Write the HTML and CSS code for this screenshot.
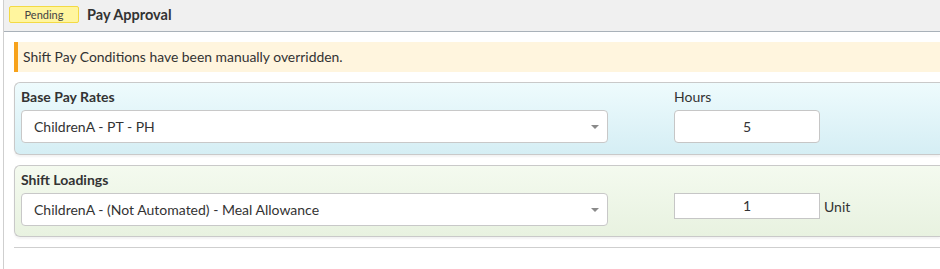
FILE: index.html
```html
<!DOCTYPE html>
<html>
<head>
<meta charset="utf-8">
<link rel="stylesheet" href="styles.css">
</head>
<body>
<div class="page">
  <div class="header">
    <span class="badge">Pending</span>
    <span class="title">Pay Approval</span>
  </div>
  <div class="content">
    <div class="alert">Shift Pay Conditions have been manually overridden.</div>
    <div class="panel panel-blue">
      <div class="row">
        <div class="field-main">
          <div class="label bold">Base Pay Rates</div>
          <div class="select"><span>ChildrenA - PT - PH</span><span class="caret"></span></div>
        </div>
        <div class="field-side">
          <div class="label">Hours</div>
          <div class="side-row"><div class="input rounded">5</div></div>
        </div>
      </div>
    </div>
    <div class="panel panel-green">
      <div class="row">
        <div class="field-main">
          <div class="label bold">Shift Loadings</div>
          <div class="select"><span>ChildrenA - (Not Automated) - Meal Allowance</span><span class="caret"></span></div>
        </div>
        <div class="field-side">
          <div class="label"></div>
          <div class="side-row"><div class="input square">1</div><span class="unit">Unit</span></div>
        </div>
      </div>
    </div>
    <div class="divider"></div>
  </div>
</div>
</body>
</html>
```
FILE: styles.css
```css
html, body {
  margin: 0;
  padding: 0;
  overflow: hidden;
  background: #fff;
}
body {
  font-family: Lato, "Open Sans", sans-serif;
  color: #333;
  width: 940px;
  height: 269px;
}
.page {
  margin-left: 3px;
  border-left: 1px solid #cfcfcf;
  height: 269px;
}
.header {
  height: 31px;
  background: #f0f0f0;
  border-bottom: 1px solid #a9b1b9;
  display: flex;
  align-items: center;
  padding-left: 5px;
}
.badge {
  box-sizing: border-box;
  width: 70px;
  height: 17px;
  margin-top: -3px;
  background: #fff59e;
  border: 1px solid #f3da44;
  border-radius: 2px;
  font-size: 11px;
  line-height: 15px;
  text-align: center;
  color: #444;
}
.title {
  margin-left: 8px;
  margin-top: -3px;
  font-size: 14.5px;
  font-weight: bold;
  color: #333;
}
.content {
  padding: 10px 0 0 10px;
}
.alert {
  height: 30px;
  box-sizing: border-box;
  border-left: 4px solid #f7a21b;
  background: #fff5de;
  padding-left: 5px;
  font-size: 13.9px;
  line-height: 30px;
  color: #333;
}
.panel {
  margin-top: 10px;
  border: 1px solid #c9c9c9;
  border-right: none;
  border-radius: 6px 0 0 6px;
  padding: 5px 0 11px 6px;
  box-shadow: 0 2px 2px rgba(0,0,0,0.05);
}
.panel-blue {
  background: linear-gradient(#eefbfd, #d5eef4);
}
.panel-green {
  background: linear-gradient(#f4faef, #e8f2e0);
  padding-bottom: 10px;
}
.row {
  display: flex;
}
.field-main {
  width: 587px;
}
.field-side {
  margin-left: 66px;
}
.label {
  height: 18px;
  line-height: 18px;
  margin-bottom: 4px;
  font-size: 14px;
}
.bold {
  font-weight: bold;
}
.select {
  box-sizing: border-box;
  height: 33px;
  background: #fff;
  border: 1px solid #c8c8c8;
  border-radius: 4px;
  display: flex;
  align-items: center;
  justify-content: space-between;
  padding: 0 8px 0 12px;
  font-size: 14px;
}
.caret {
  width: 0;
  height: 0;
  border-left: 4px solid transparent;
  border-right: 4px solid transparent;
  border-top: 4px solid #8a8a8a;
  margin-top: 1px;
}
.side-row {
  display: flex;
  align-items: center;
}
.input {
  box-sizing: border-box;
  width: 146px;
  background: #fff;
  border: 1px solid #c6c6c6;
  text-align: center;
  font-size: 14px;
}
.input.rounded {
  height: 33px;
  line-height: 31px;
  border-radius: 4px;
}
.input.square {
  height: 26px;
  line-height: 24px;
}
.unit {
  margin-left: 4px;
  font-size: 14px;
}
.divider {
  margin-top: 10px;
  height: 1px;
  background: #cfcfcf;
}
```
